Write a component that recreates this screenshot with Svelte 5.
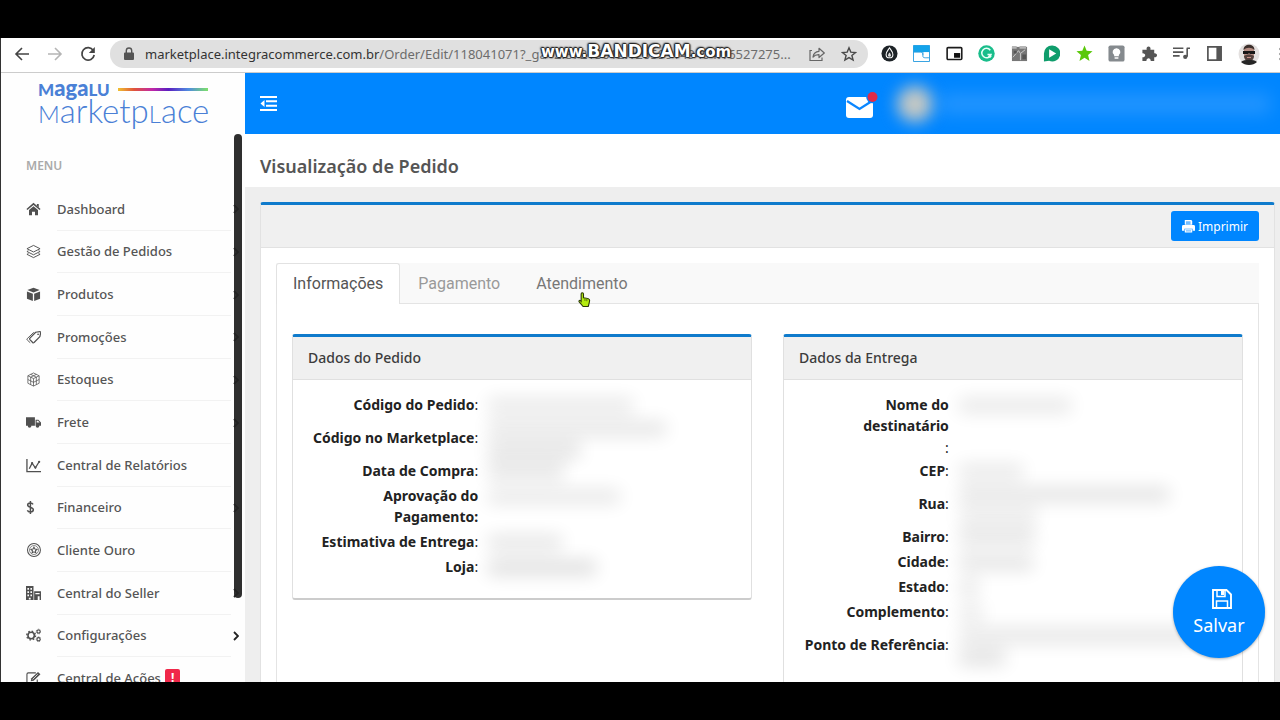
<script>
  const icons = {
    home: '<path d="M1 8 8 2l7 6" fill="none" stroke="currentColor" stroke-width="1.7"/><path d="M11.6 2.2h2v3.6l-2-1.7zM3.2 8.4 8 4.4l4.8 4V14H9.6v-3.6H6.4V14H3.2z"/>',
    layers: '<g fill="none" stroke="currentColor" stroke-width="1"><path d="M8 1.5 15 5 8 8.5 1 5z"/><path d="M2.6 7.2 1 8l7 3.5L15 8l-1.6-.8"/><path d="M2.6 10.2 1 11l7 3.5 7-3.5-1.6-.8"/></g>',
    box: '<path d="M8 .8 14.600 3.200 8 5.800 1.400 3.200zM1 4.800l6.300 2.500v7.500L1 12.400zM15 4.800 8.700 7.300v7.500l6.300-2.400z"/>',
    tag: '<g fill="none" stroke="currentColor" stroke-width="1.3" stroke-linejoin="round"><path d="m4.200 8.700 6.100-6.300 4.600-.7c.6 0 .9.4.8 1l-.9 4.300-6.200 6.300c-.6.5-1 .5-1.500 0l-2.900-3.100c-.5-.6-.5-1 0-1.500z"/><path d="M8.300 2.500 1.300 9.200c-.5.6-.5 1 0 1.400l3.200 3" stroke-width="1"/></g><circle cx="12.900" cy="4.500" r=".9"/>',
    cube: '<g fill="none" stroke="currentColor" stroke-width=".8"><path d="m8 1 6 3v8l-6 3-6-3V4zM2 4l6 3 6-3M8 7v8M5 2.500l6 3v8M11 2.500l-6 3v8M2 8l6 3 6-3"/></g>',
    truck: '<path d="M0 2.500h9.500v9H0zM10.200 5h3l2.800 3v3.500h-5.800z"/><circle cx="3.800" cy="11.800" r="1.900"/><circle cx="12.300" cy="11.800" r="1.900"/><path d="M11.400 6h1.500l1.600 2h-3.100z" fill="#fff"/>',
    chart: '<path d="M1 1v13.500h15M3.500 11.500l3-6 3.500 5 4-6.500" fill="none" stroke="currentColor" stroke-width="1.400"/><circle cx="6.500" cy="5.500" r="1.200"/><circle cx="10" cy="10.200" r="1.200"/><circle cx="14" cy="4" r="1.200"/>',
    dollar: '<path d="M7.500 4.700C7 3.700 6 3.200 4.700 3.200c-1.700 0-2.900.8-2.900 2.200 0 3.200 6 1.700 6 5 0 1.500-1.300 2.400-3.100 2.400-1.600 0-2.800-.7-3.200-1.900M4.700 1v14" fill="none" stroke="currentColor" stroke-width="1.600"/>',
    medal: '<g fill="none" stroke="currentColor" stroke-width="1.100"><circle cx="8.500" cy="7.500" r="6.900"/><circle cx="8.500" cy="7.500" r="4.800" stroke-width=".7"/><path d="m8.500 4.400 1 2 2.200.3-1.600 1.600.4 2.200-2-1-2 1 .4-2.200-1.600-1.600 2.200-.3z"/></g>',
    building: '<path fill-rule="evenodd" d="M0 0h8v15H0zM1.500 2v2h1.700V2zm3.200 0v2h1.700V2zM1.500 5.500v2h1.700v-2zm3.200 0v2h1.700v-2zM1.500 9v2h1.700V9zm3.200 0v2h1.700V9zM3 12.500v2h2v-2z"/><path fill-rule="evenodd" d="M8.700 5.500H16V15h-1.500v-4h-2v4H8.700zM10 7.500v1.200h4.500V7.500z"/>',
    gears: '<g fill="none" stroke="currentColor"><circle cx="5.500" cy="8" r="3.400" stroke-width="1.700"/><circle cx="5.500" cy="8" r="4.700" stroke-width="1.400" stroke-dasharray="1.700 1.990"/><circle cx="13.400" cy="3.800" r="1.700" stroke-width="1.200"/><circle cx="13.400" cy="3.800" r="2.500" stroke-width=".9" stroke-dasharray="1 .960"/><circle cx="13.400" cy="12" r="1.700" stroke-width="1.200"/><circle cx="13.400" cy="12" r="2.500" stroke-width=".9" stroke-dasharray="1 .960"/></g>',
    edit: '<path d="M10.500 2H2.500A1.500 1.500 0 0 0 1 3.500v9A1.500 1.500 0 0 0 2.500 14h8a1.500 1.500 0 0 0 1.500-1.500V9" fill="none" stroke="currentColor" stroke-width="1.200"/><path d="m5 11 .7-3.200L12.800 1l2.600 2.400-7.200 6.900z"/><path d="m7 9 5.500-5.500" stroke="#fff" stroke-width=".8"/>'
  };

  const menu = [
    { label: 'Dashboard', icon: 'home', arrow: true },
    { label: 'Gestão de Pedidos', icon: 'layers', arrow: true },
    { label: 'Produtos', icon: 'box', arrow: true },
    { label: 'Promoções', icon: 'tag', arrow: true },
    { label: 'Estoques', icon: 'cube', arrow: true },
    { label: 'Frete', icon: 'truck', arrow: true },
    { label: 'Central de Relatórios', icon: 'chart' },
    { label: 'Financeiro', icon: 'dollar', arrow: true },
    { label: 'Cliente Ouro', icon: 'medal' },
    { label: 'Central do Seller', icon: 'building', arrow: true },
    { label: 'Configurações', icon: 'gears', arrow: true },
    { label: 'Central de Ações', icon: 'edit', badge: '!' }
  ];

  // masks: widths in px of each hidden value line, with its darkness
  const order = [
    { label: ['Código do Pedido'], masks: [[145, 0.09]] },
    { label: ['Código no Marketplace'], masks: [[178, 0.1], [92, 0.12]], tall: true },
    { label: ['Data de Compra'], masks: [[76, 0.11]] },
    { label: ['Aprovação do', 'Pagamento:'], masks: [[132, 0.09]], plain: true },
    { label: ['Estimativa de Entrega'], masks: [[74, 0.1]] },
    { label: ['Loja'], masks: [[108, 0.13]] }
  ];
  const delivery = [
    { label: ['Nome do', 'destinatário'], masks: [[112, 0.09]], loose: true },
    { label: ['CEP'], masks: [[64, 0.09]] },
    { label: ['Rua'], masks: [[210, 0.11], [78, 0.09]], tall: true },
    { label: ['Bairro'], masks: [[76, 0.11]] },
    { label: ['Cidade'], masks: [[74, 0.11]] },
    { label: ['Estado'], masks: [[20, 0.1]] },
    { label: ['Complemento'], masks: [[24, 0.09]] },
    { label: ['Ponto de Referência'], masks: [[240, 0.1], [46, 0.12]], tall: true }
  ];
</script>

{#snippet card(title, rows, kind)}
  <section class="card {kind}">
    <h2>{title}</h2>
    <dl>
      {#each rows as row}
        <div class="row" class:tall={row.tall} class:loose={row.loose}>
          <dt>
            {#each row.label as line, i}{#if i}<br />{/if}<b>{line}</b>{/each}{#if row.loose}<span class="below">:</span>{:else if !row.plain}:{/if}
          </dt>
          <dd>
            {#each row.masks as [w, a]}
              <span class="mask" style="width:{w}px;opacity:{a}"></span>
            {/each}
          </dd>
        </div>
      {/each}
    </dl>
  </section>
{/snippet}

<div class="frame">
  <div class="browser">
    <div class="toolbar">
      <div class="nav">
        <button aria-label="Voltar"><svg viewBox="0 0 16 16"><path d="M15 8H2M8 2 2 8l6 6" fill="none" stroke="#444" stroke-width="1.600" /></svg></button>
        <button aria-label="Avançar"><svg viewBox="0 0 16 16"><path d="M1 8h13M8 2l6 6-6 6" fill="none" stroke="#b5b5b5" stroke-width="1.600" /></svg></button>
        <button aria-label="Recarregar"><svg viewBox="0 0 16 16"><path d="M13.300 4.500A6.200 6.200 0 1 0 14.200 9" fill="none" stroke="#444" stroke-width="1.700" /><path d="M14.800 1v6H8.800z" fill="#444" /></svg></button>
      </div>
      <div class="address">
        <svg class="lock" viewBox="0 0 10 14"><path d="M1 5.500h8a1 1 0 0 1 1 1V12a1 1 0 0 1-1 1H1a1 1 0 0 1-1-1V6.500a1 1 0 0 1 1-1z" fill="#555" /><path d="M2.300 6V3.700a2.700 2.700 0 0 1 5.400 0V6" fill="none" stroke="#555" stroke-width="1.400" /></svg>
        <span class="url"><span class="host">marketplace.integracommerce.com.br</span>/Order/Edit/118041071?_ga=2.87215012.126599149404.16527275...</span>
        <span class="watermark">www.<b>BANDICAM</b>.com</span>
        <button aria-label="Compartilhar"><svg viewBox="0 0 16 16"><path d="M3 4.500H1V14.500h12V11.500" fill="none" stroke="#666" stroke-width="1.200" /><path d="M4 11c.5-3.500 2.500-5.500 6-5.700V2.300l5.300 4.700L10 11.500V8.700C7.500 8.600 5.500 9.300 4 11z" fill="none" stroke="#666" stroke-width="1.200" stroke-linejoin="round" /></svg></button>
        <button aria-label="Favoritar"><svg viewBox="0 0 16 16"><path d="m8 1.800 1.800 4.300 4.700.4-3.600 3 1.200 4.600L8 11.600l-4.100 2.500 1.200-4.600-3.600-3 4.700-.4z" fill="none" stroke="#4a4a4a" stroke-width="1.400" /></svg></button>
      </div>
      <div class="extensions">
        <svg viewBox="0 0 18 18"><circle cx="9" cy="9" r="8.500" fill="#1d2327" /><path d="M9 3c2 3 3.600 4.700 3.600 7a3.600 3.600 0 0 1-7.200 0C5.400 7.700 7 6 9 3z" fill="none" stroke="#fff" stroke-width="1.100" /><path d="M9 8c1 1.300 1.500 2 1.500 3a1.500 1.500 0 0 1-3 0c0-1 .5-1.700 1.500-3z" fill="#ddd" /></svg>
        <svg viewBox="0 0 18 18"><path d="M.5.500h17v17H.5z" fill="#fff" stroke="#2a9de0" /><path d="M.5.500h17v7H.5z" fill="#13a3ea" /><path d="M.5 7.500h8c2 0 2 2.500 2 4.500s3 1.500 7 1.500M10.500 7.500v3" fill="none" stroke="#2a9de0" /></svg>
        <svg viewBox="0 0 18 18"><rect x="1.200" y="2.800" width="15.500" height="12.500" rx="1" fill="#fff" stroke="#1c1c1c" stroke-width="1.700" /><path d="M8.500 8.500h6.500V13.500H8.500z" fill="#111" /></svg>
        <svg viewBox="0 0 18 18"><circle cx="9" cy="9" r="8.700" fill="#19bd8b" /><path d="M13 5.500A5 5 0 1 0 13.800 10H10" fill="none" stroke="#e9fff7" stroke-width="1.600" /><circle cx="12.500" cy="12" r="1.600" fill="#e9fff7" /></svg>
        <svg viewBox="0 0 18 18"><path d="M1 2h16v15H1z" fill="#777" /><path d="M1 1h5v3H1zM9 1h7v3H9z" fill="#b5b5b5" /><path d="m2 13 6-7 2 3 5-4M10 9v7" stroke="#ccc" fill="none" /><path d="M3 6h3v3H3zM12 10h4v5h-4z" fill="#555" /></svg>
        <svg viewBox="0 0 18 18"><path d="M9.500.500a8.500 8.500 0 1 1-3 16.300L1 17.500V9A8.500 8.500 0 0 1 9.500.500z" fill="#0f9d6c" /><path d="m6.500 4.500 7.500 4.500-7.500 4.500z" fill="#fff" /></svg>
        <svg viewBox="0 0 18 18"><path d="m9 .5 2.300 5.700 6.200.4-4.700 4 1.500 6.400L9 13.600 3.700 17l1.500-6.400L.5 6.600l6.200-.4z" fill="#5ac80a" /></svg>
        <svg viewBox="0 0 18 18"><rect x=".5" y=".5" width="17" height="17" rx="2" fill="#858a8e" /><path d="M9 3.500a4 4 0 0 1 2.500 7.200V12h-5v-1.300A4 4 0 0 1 9 3.500zM7 13h4v1.500H7z" fill="#fff" /></svg>
        <svg viewBox="0 0 18 18"><path d="M1.500 5h4.500C5 .5 11 .5 10 5h4v3.700c4-.4 4 4.600 0 4.300V17h-3.700c0-4-4.600-4-4.600 0H1.500v-4c4 0 4-4.500 0-4.300z" fill="#555" /></svg>
        <svg viewBox="0 0 18 18"><path d="M0 3.500h11M0 7.500h11M0 11.500h7M15 3.500v9M14.500 3.500H18" stroke="#555" stroke-width="1.700" fill="none" /><circle cx="13" cy="12.500" r="2.300" fill="#555" /></svg>
        <svg viewBox="0 0 18 18"><path d="M2 2h14v14H2z" fill="#fff" stroke="#555" stroke-width="1.800" /><path d="M11 2h5v14h-5z" fill="#555" /></svg>
        <svg class="avatar" viewBox="0 0 22 22"><circle cx="11" cy="11" r="10.500" fill="#e3e0df" /><path d="M6 6c0-5 10-5 10 0v6c0 6-10 6-10 0z" fill="#b58c82" /><path d="M5.500 7c0-7 11-7 11 0-3-3-8-3-11 0z" fill="#3c302c" /><path d="M5 8h12v3h-5l-1-1-1 1H5z" fill="#171717" /><path d="M6 13c3-2 7-2 10 0 0 7-10 7-10 0z" fill="#54423d" /><path d="M9 14h4v1H9z" fill="#c98f88" /><path d="M3 19c3-3 13-3 16 0-4 4-12 4-16 0z" fill="#262626" /></svg>
      </div>
      <button class="more" aria-label="Mais opções"><svg viewBox="0 0 4 16"><circle cx="2" cy="3" r="1.600" /><circle cx="2" cy="8" r="1.600" /><circle cx="2" cy="13" r="1.600" /></svg></button>
    </div>

    <div class="page">
      <aside>
        <a class="logo" href="#inicio">
          <span class="brand"><span class="name"><i>M</i>aga<i>LU</i></span><span class="rainbow"></span></span>
          <span class="product"><i>M</i>arketp<i>L</i>ace</span>
        </a>
        <div class="side">
          <p>MENU</p>
          <ul>
            {#each menu as item}
              <li>
                <a href="#menu">
                  <svg class="icon" viewBox="0 0 16 16" fill="currentColor">{@html icons[item.icon]}</svg>
                  <span class="text">{item.label}{#if item.badge}<span class="badge">{item.badge}</span>{/if}</span>
                  <svg class="arrow" class:none={!item.arrow} viewBox="0 0 6 10"><path d="m1 1 4 4-4 4" fill="none" stroke="#222" stroke-width="1.800" /></svg>
                </a>
              </li>
            {/each}
          </ul>
          <div class="scroller"></div>
        </div>
      </aside>

      <main>
        <header>
          <button class="toggle" aria-label="Recolher menu"><svg viewBox="0 0 17 15"><path d="M0 1h17M6 5.300h11M6 9.700h11M0 14h17" stroke="#fff" stroke-width="2" /><path d="M4.500 4v7L.5 7.500z" fill="#fff" /></svg></button>
          <div class="account">
            <button class="mail" aria-label="Mensagens"><svg viewBox="0 0 32 28"><rect x="0" y="7" width="27" height="21" rx="3" fill="#fff" /><path d="m1 11 12.500 8L26 11" fill="none" stroke="#0a86ff" stroke-width="2.300" /><circle cx="26.500" cy="7" r="6.300" fill="#0086ff" /><circle cx="26.500" cy="7" r="5" fill="#e02b48" /></svg></button>
            <span class="photo"></span>
            <span class="user"></span>
          </div>
        </header>
        <h1>Visualização de Pedido</h1>
        <div class="content">
          <div class="panel">
            <div class="actions">
              <button class="print"><svg viewBox="0 0 14 14"><path d="M3 0h7l1 1v4H3zM1.500 5.500h11A1.500 1.500 0 0 1 14 7v4.500h-2.500v-2h-9v2H0V7a1.500 1.500 0 0 1 1.500-1.500zM3 10h8v3.500H3z" fill="#fff" /><path d="M4.200 1.300h5v3.500h-5zM4.200 11h5.600v1.300H4.200z" fill="#0086ff" opacity=".55" /></svg>Imprimir</button>
            </div>
            <div class="body">
              <div class="tabs" role="tablist">
                <button role="tab" aria-selected="true" class="active">Informações</button>
                <button role="tab" aria-selected="false">Pagamento</button>
                <button role="tab" aria-selected="false" class="hover">Atendimento
                  <svg class="cursor" viewBox="0 0 14 18"><path d="M4.500 1.200c1 0 1.400.6 1.400 1.400v4c2.500.2 6.600.8 6.600 2.800 0 2.400-.7 4-1.500 6.600H5.500L1.300 11c-.7-1 .3-2 1.300-1.300l.8.8V2.600c0-.8.3-1.400 1.100-1.400z" fill="#b4ec10" stroke="#2c3a08" stroke-width="1.200" /><path d="M7.500 7v3M9.500 7.300v3" stroke="#4f6a0c" /></svg>
                </button>
              </div>
              <div class="cards">
                {@render card('Dados do Pedido', order, 'order')}
                {@render card('Dados da Entrega', delivery, 'delivery')}
              </div>
            </div>
          </div>
        </div>
        <button class="save"><svg viewBox="0 0 20 20"><path d="M1 1h13.500L19 5.500V19H1z" fill="none" stroke="#fff" stroke-width="1.900" /><path d="M5 1v6.500h8V1M4.500 19v-7h11v7" fill="none" stroke="#fff" stroke-width="1.500" /><path d="M9 1.500h3v4.500H9z" fill="#fff" /></svg>Salvar</button>
      </main>
    </div>
  </div>
</div>

<style>
  :global(body) { margin: 0; background: #000; }
  * { box-sizing: border-box; }
  button { border: 0; padding: 0; background: none; font: inherit; color: inherit; cursor: pointer; }
  svg { display: block; flex: none; }
  a { color: inherit; text-decoration: none; }
  i { font-style: normal; }
  h1, h2, p, ul, dl, dd { margin: 0; padding: 0; }

  .frame { height: 100vh; padding: 38px 0; background: #000; overflow: hidden; font-family: "Noto Sans", "Open Sans", sans-serif; }
  .browser { height: 100%; display: flex; flex-direction: column; overflow: hidden; background: #fff; border-left: 1px solid #333; }

  .toolbar { flex: none; height: 35px; display: flex; align-items: center; padding: 0 0 3px 13px; border-bottom: 1px solid #ccc; overflow: hidden; }
  .nav { display: flex; gap: 17px; }
  .nav svg, .address button svg { width: 16px; height: 16px; }
  .address { position: relative; flex: 1; min-width: 0; height: 28px; margin: 0 13px 0 14px; padding: 0 11px 0 14px; display: flex; align-items: center; gap: 16px; border-radius: 14px; background: #e0e0e0; }
  .lock { width: 10px; height: 14px; }
  .url { flex: 1; min-width: 0; margin-left: -5px; font-size: 13px; white-space: nowrap; overflow: hidden; color: #6c6c6c; }
  .host { color: #333; }
  .watermark { position: absolute; left: 431px; top: 1px; font: bold 15px/20px "DejaVu Sans", sans-serif; color: #fff; white-space: nowrap; text-shadow: 1px 0 1px #222, -1px 0 1px #222, 0 1px 1px #222, 0 -1px 1px #222, 1px 1px 2px #333, -1px -1px 2px #333; }
  .watermark b { font-size: 17px; }
  .extensions { flex: none; width: 379px; display: flex; align-items: center; justify-content: space-between; }
  .extensions svg { width: 17px; height: 17px; }
  .extensions .avatar { width: 22px; height: 22px; }
  .more { margin: 0 -3px 0 19px; }
  .more svg { width: 4px; height: 16px; fill: #555; }

  .page { flex: 1; min-height: 0; display: flex; }
  aside { flex: none; width: 244px; display: flex; flex-direction: column; background: #fefefe; }
  .logo { flex: none; height: 61px; padding: 5px 0 0 37px; display: flex; flex-direction: column; color: #4a80d6; font-family: Lato, sans-serif; }
  .brand { display: flex; align-items: center; gap: 8px; height: 22px; }
  .name { font-size: 22px; line-height: 22px; font-weight: 900; }
  .name i { font-size: 17px; }
  .rainbow { width: 90px; height: 3px; background: linear-gradient(90deg, #f0c030, #e0543a 18%, #c027a8 38%, #5a1fc0 56%, #4f8be0 78%, #7ee06a); }
  .product { font-size: 33px; line-height: 32px; font-weight: 300; margin-top: -6px; }
  .product i { font-size: 24px; }
  .side { position: relative; flex: 1; min-height: 0; overflow: hidden; }
  .side p { height: 54px; padding: 22px 0 0 25px; font-size: 12px; line-height: 20px; font-weight: 600; color: #aaa; }
  .side ul { list-style: none; min-height: 512px; display: grid; grid-auto-rows: 1fr; }
  .side a { height: 100%; display: flex; align-items: center; padding: 0 6px 0 25px; gap: 16px; font-size: 13px; font-weight: 500; color: #555; }
  .icon { width: 15px; height: 15px; color: #505050; }
  .text { flex: 1; display: flex; align-items: center; align-self: stretch; gap: 4px; border-bottom: 1px solid #f2f2f2; }
  .badge { padding: 0 6px; border-radius: 2px; background: #f0284a; color: #fff; font-size: 12px; line-height: 18px; font-weight: 700; }
  .arrow { width: 6px; height: 10px; margin-left: -14px; }
  .none { visibility: hidden; }
  .scroller { position: absolute; right: 3px; top: 0; width: 8px; height: 464px; border-radius: 4px; background: rgba(34, 34, 34, 0.94); }

  main { position: relative; flex: 1; min-width: 0; display: flex; flex-direction: column; overflow: hidden; background: #eee; }
  header { flex: none; height: 61px; padding: 0 0 0 15px; display: flex; align-items: center; justify-content: space-between; background: #0086ff; }
  .toggle svg { width: 17px; height: 15px; }
  .account { display: flex; align-items: center; }
  .mail svg { width: 32px; height: 28px; }
  .photo { width: 36px; height: 36px; margin-left: 19px; border-radius: 50%; background: #c4c8c4; filter: blur(8px); }
  .user { width: 330px; height: 18px; margin: 0 10px 0 7px; background: #4fa8ff; opacity: 0.5; filter: blur(9px); }
  h1 { flex: none; height: 53px; padding: 10px 15px 0; display: flex; align-items: center; font-size: 18px; font-weight: 600; color: #555; background: #fff; }
  .content { flex: 1; min-height: 0; padding: 15px 5px 0 15px; }
  .panel { border: 1px solid #e2e2e2; border-top: 3px solid #0f7bcc; border-radius: 3px 3px 0 0; background: #fff; }
  .actions { height: 43px; padding: 6px 15px 0; display: flex; justify-content: flex-end; align-items: flex-start; background: #f0f0f0; border-bottom: 1px solid #e2e2e2; }
  .print { height: 30px; padding: 0 11px; display: flex; align-items: center; gap: 3px; border-radius: 3px; background: #0086ff; color: #fff; font-size: 12px; }
  .print svg { width: 13px; height: 13px; }
  .body { padding: 15px 15px 0; }
  .tabs { height: 41px; display: flex; background: #f9f9f9; border-bottom: 1px solid #e4e4e4; font-family: Roboto, sans-serif; font-size: 16px; }
  .tabs button { position: relative; height: 41px; padding: 0 18px 1px 18px; color: #999; }
  .tabs .active { padding: 0 16px 1px 16px; color: #555; background: #fff; border: 1px solid #e2e2e2; border-bottom: 0; border-radius: 3px 3px 0 0; }
  .tabs .hover { color: #777; }
  .cursor { position: absolute; left: 60px; top: 28px; width: 13px; height: 18px; }
  .cards { display: flex; align-items: flex-start; gap: 31px; padding: 30px 15px 30px; border: 1px solid #e4e4e4; border-top: 0; }
  .card { flex: 1; min-width: 0; border: 1px solid #e0e0e0; border-top: 3px solid #0f7bcc; border-bottom: 2px solid #ccc; border-radius: 3px; background: #fff; }
  h2 { height: 43px; padding: 0 15px 1px; display: flex; align-items: center; font-size: 14px; font-weight: 500; color: #3c3c3c; background: #f0f0f0; border-bottom: 1px solid #e0e0e0; }
  dl { padding: 12px 0 19px; font-size: 14px; line-height: 21px; color: #222; }
  .row { display: grid; grid-template-columns: calc(40% + 2px) 1fr; column-gap: 10px; min-height: 25px; padding: 2px 0; }
  .delivery .row { grid-template-columns: 36% 1fr; }
  .tall { height: 41px; padding: 0; align-items: center; }
  .loose { padding-bottom: 0; }
  dt { text-align: right; }
  .below { display: block; line-height: 20px; padding-top: 2px; }
  dt b { font-weight: 700; }
  dd { display: grid; gap: 7px; align-content: start; padding-top: 4px; }
  .mask { height: 15px; background: #000; filter: blur(9px); max-width: 100%; }
  .save { position: absolute; right: 15px; bottom: 24px; width: 92px; height: 92px; padding-top: 3px; display: flex; flex-direction: column; align-items: center; justify-content: center; gap: 3px; border-radius: 50%; background: #0086ff; color: #fff; font-size: 18px; line-height: 26px; box-shadow: 0 1px 3px rgba(0, 0, 0, 0.3); }
  .save svg { width: 20px; height: 20px; margin-left: 6px; }
</style>
